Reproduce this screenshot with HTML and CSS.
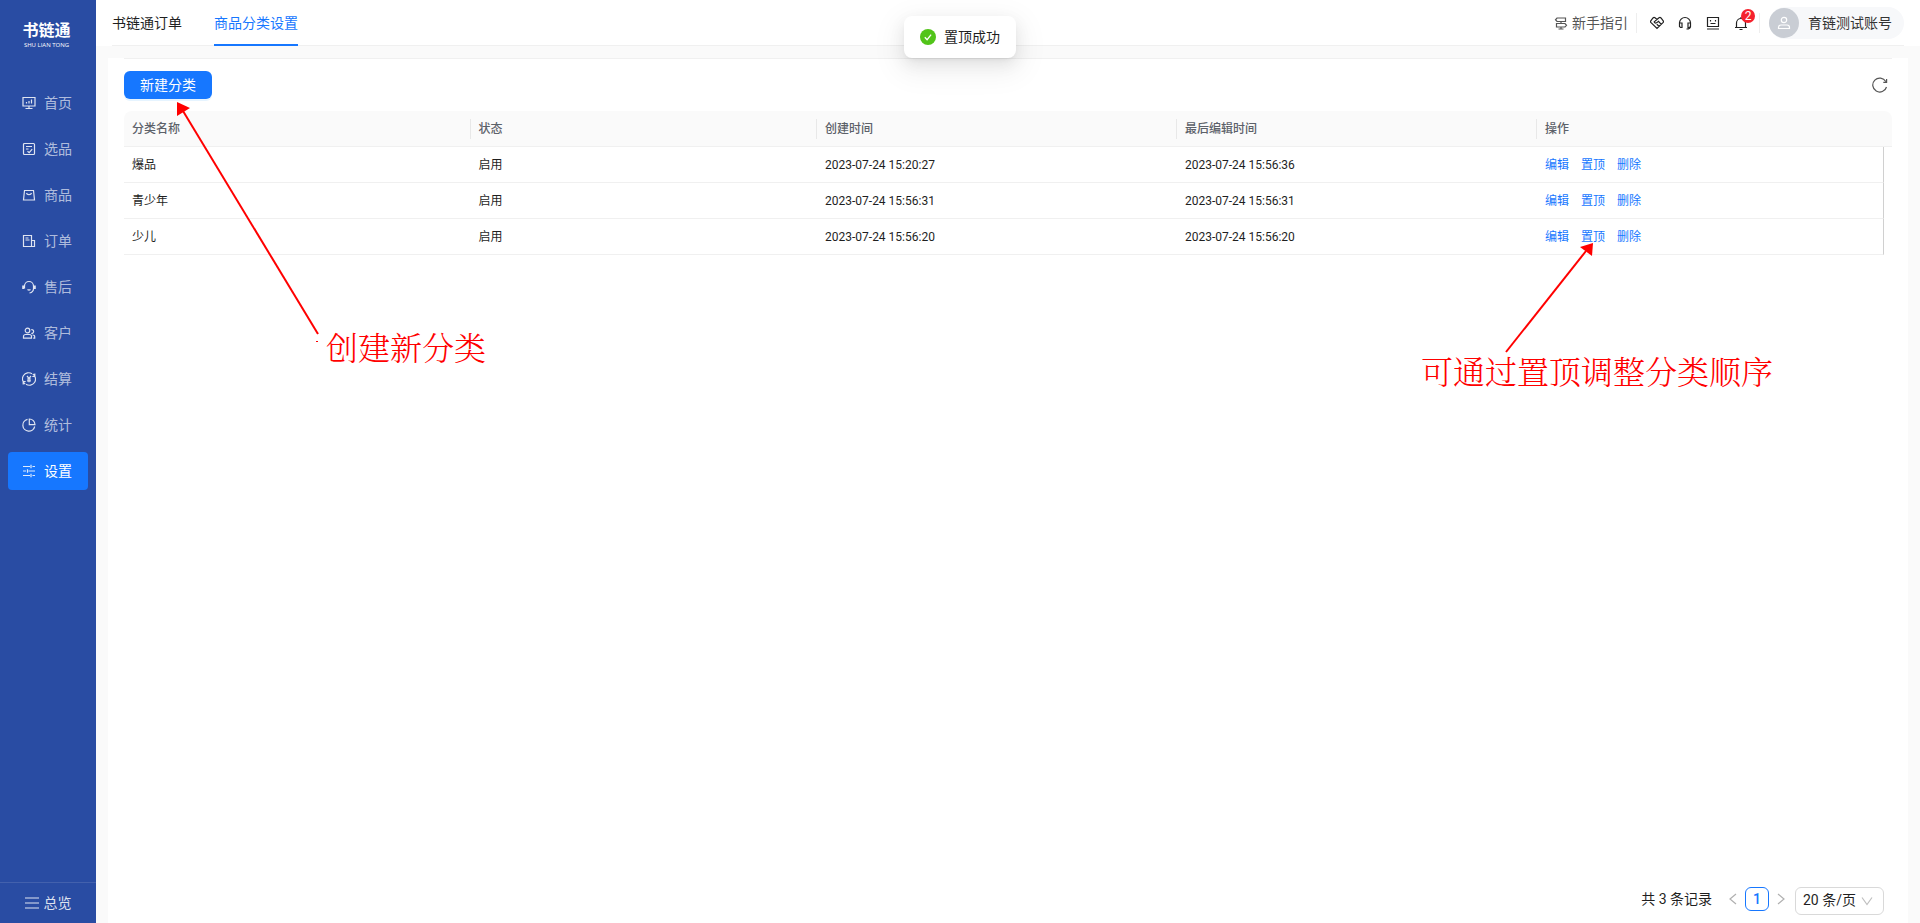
FILE: index.html
```html
<!DOCTYPE html>
<html lang="zh-CN">
<head>
<meta charset="utf-8">
<title>商品分类设置</title>
<link rel="stylesheet" href="styles.css">
</head>
<body>
<div class="app">
  <aside class="sidebar">
    <div class="logo">
      <span class="logo-name">书链通</span>
      <span class="logo-sub">SHU LIAN TONG</span>
    </div>
    <nav class="menu">
      <a class="menu-item" href="#"><svg class="icon" viewBox="0 0 14 14"><path d="M1 1.500h12v8.500H1zM7 10v2.500M3.500 12.500h7M4.500 7.500v-1.500M7 7.500v-2.500M9.500 7.500v-4"/></svg>首页</a>
      <a class="menu-item" href="#"><svg class="icon" viewBox="0 0 14 14"><rect x="1.500" y="1.500" width="11" height="11" rx="1"/><path d="M4 4.500h6M4 7h2.500M5.500 9.200l1.700 1.500L10.200 7.200"/></svg>选品</a>
      <a class="menu-item" href="#"><svg class="icon" viewBox="0 0 14 14"><path d="M2.500 2.500h9l1 9.500h-11zM4.500 5c.5 2.200 4.500 2.200 5 0"/></svg>商品</a>
      <a class="menu-item" href="#"><svg class="icon" viewBox="0 0 14 14"><path d="M9.500 12.500h-8v-11h8zM9.500 6.500h3v6h-3M3.500 4h3M3.500 6h4"/></svg>订单</a>
      <a class="menu-item" href="#"><svg class="icon" viewBox="0 0 14 14"><path d="M2.500 8.500V6a4.500 4.500 0 0 1 9 0v2.500c0 2.500-1.500 4-4 4.500M5.500 9.500c1 .8 2 .8 3 0"/><path d="M1.200 5.500v3.500M12.800 5.500v3.500" stroke-width="2"/></svg>售后</a>
      <a class="menu-item" href="#"><svg class="icon" viewBox="0 0 14 14"><circle cx="5.500" cy="4.500" r="2.300"/><path d="M1.500 12.200V10.500c0-1.200.8-2 2-2h4c1.200 0 2 .8 2 2v1.700zM9.300 3.600a1.900 1.900 0 1 1 0 3.700M10.500 9c1.500 0 2.200.8 2.200 1.800v1.400h-1.500"/></svg>客户</a>
      <a class="menu-item" href="#"><svg class="icon" viewBox="0 0 14 14"><path d="M3.200 12A6 6 0 0 1 10 1.800M10.800 2A6 6 0 0 1 4 12.200M12.800 1.500v3h-2.500M1.200 12.500v-3h2.500M5 4l2 2.300L9 4M7 6.300v4M5 7h4M5 8.800h4"/></svg>结算</a>
      <a class="menu-item" href="#"><svg class="icon" viewBox="0 0 14 14"><path d="M5.500 1.300a6 6 0 1 0 7.200 7.200M7.300 1v5.700H13A5.700 5.700 0 0 0 7.300 1z"/></svg>统计</a>
      <a class="menu-item active" href="#"><svg class="icon" viewBox="0 0 14 14"><path d="M1 2.500h7M10.500 2.500H13M1 7h3M6.500 7H13M1 11.500h7M10.500 11.500H13M9 .8v3.400M5.500 5.300v3.400M9 9.800v3.400"/></svg>设置</a>
    </nav>
    <a class="overview" href="#"><svg class="icon" viewBox="0 0 14 14"><path d="M0 2h14M0 7h14M0 12h14"/></svg>总览</a>
  </aside>

  <div class="main">
    <header class="topbar">
      <nav class="tabs">
        <a class="tab" href="#">书链通订单</a>
        <a class="tab current" href="#">商品分类设置</a>
      </nav>
      <div class="tools">
        <a class="guide" href="#"><svg class="icon guide-icon" viewBox="0 0 14 14"><path d="M3 2h8.500v3.500H3L1.500 3.750zM2.500 7.500H11l1.500 1.750L11 11H2.500zM7 5.500v2M7 11v2M4.500 13h5"/></svg>新手指引</a>
        <div class="icon-group">
          <button class="tool" aria-label="合作"><svg class="icon" viewBox="0 0 14 14"><path d="M7 3.500 5 1.800C4.300 1.300 3.700 1.300 3 2L.8 4.800c-.4.600-.4 1.100 0 1.600L7 12.400l6.200-6c.4-.5.400-1 0-1.600L11 2c-.7-.7-1.300-.7-2-.2L4.200 5.900c.7 1.500 2 1.500 3.300.2L8.500 5.300l2.800 3M6.800 8.200l2.400 2.200"/></svg></button>
          <button class="tool" aria-label="客服"><svg class="icon" viewBox="0 0 14 14"><path d="M1.500 9.500V7a5.500 5.500 0 0 1 11 0v3.500c0 1.500-1.500 2.500-4 2.500M1.500 7H4v4.500H2.500l-1-1zM12.500 7H10v4.500h1.500l1-1z"/></svg></button>
          <button class="tool" aria-label="反馈"><svg class="icon" viewBox="0 0 14 14"><path d="M1.500 1.500h11v9h-11zM1 13h12M4.500 4v1.500M9.500 4v1.500M4.500 7.500h5"/></svg></button>
          <button class="tool" aria-label="消息"><svg class="icon" viewBox="0 0 14 14"><path d="M2.500 11.500V7a4.500 4.500 0 0 1 9 0v4.500M1 11.500h12M7 2.500V1M5.500 13.500h3"/></svg><span class="badge">2</span></button>
        </div>
        <button class="account">
          <span class="avatar"><svg class="icon" viewBox="0 0 14 14"><circle cx="7" cy="4" r="2.700"/><path d="M1.500 12.500v-1c0-1.500 1-2.500 2.500-2.500h6c1.500 0 2.500 1 2.500 2.500v1z"/></svg></span>
          育链测试账号
        </button>
      </div>
    </header>

    <main class="panel">
      <div class="toolbar">
        <button class="primary">新建分类</button>
        <button class="reload" aria-label="刷新"><svg class="icon" viewBox="0 0 16 16"><path d="M14.500 10A7 7 0 1 1 13.800 4.500M14.600 2v3.300h-3.300"/></svg></button>
      </div>

      <table class="table">
        <colgroup><col class="c-name"><col class="c-state"><col class="c-time"><col class="c-time"><col><col class="c-gutter"></colgroup>
        <thead>
          <tr><th>分类名称</th><th>状态</th><th>创建时间</th><th>最后编辑时间</th><th colspan="2">操作</th></tr>
        </thead>
        <tbody>
          <tr><td>爆品</td><td>启用</td><td>2023-07-24 15:20:27</td><td>2023-07-24 15:56:36</td><td><div class="actions"><a href="#">编辑</a><a href="#">置顶</a><a href="#">删除</a></div></td></tr>
          <tr><td>青少年</td><td>启用</td><td>2023-07-24 15:56:31</td><td>2023-07-24 15:56:31</td><td><div class="actions"><a href="#">编辑</a><a href="#">置顶</a><a href="#">删除</a></div></td></tr>
          <tr><td>少儿</td><td>启用</td><td>2023-07-24 15:56:20</td><td>2023-07-24 15:56:20</td><td><div class="actions"><a href="#">编辑</a><a href="#">置顶</a><a href="#">删除</a></div></td></tr>
        </tbody>
      </table>

      <footer class="pagination">
        <span class="total">共 3 条记录</span>
        <div class="pager">
          <button class="step" aria-label="上一页"><svg class="icon" viewBox="0 0 12 12"><path d="M9 1 3 6l6 5"/></svg></button>
          <button class="page">1</button>
          <button class="step" aria-label="下一页"><svg class="icon" viewBox="0 0 12 12"><path d="m3 1 6 5-6 5"/></svg></button>
        </div>
        <div class="size">
          <select aria-label="每页条数"><option>20 条/页</option></select>
          <svg class="icon size-arrow" viewBox="0 0 12 12"><path d="m1 2.500 5 7 5-7"/></svg>
        </div>
      </footer>
    </main>
  </div>
</div>

<div class="toast" role="status">
  <svg class="toast-icon" viewBox="0 0 16 16"><circle cx="8" cy="8" r="8" fill="#52c41a"/><path d="m4.800 8.200 2.300 2.500 4-5" fill="none" stroke="#fff" stroke-width="1.300"/></svg>
  置顶成功
</div>

<svg class="arrow arrow-create" viewBox="0 0 144 242"><path class="shaft" d="M6 9 141 232"/><path class="tip" d="M0 0 13 6 0 14z"/><path class="tip" d="M139 239h2v1h-2z"/></svg>
<p class="note note-create">创建新分类</p>
<svg class="arrow arrow-top" viewBox="0 0 90 112"><path class="shaft" d="M81 8 1 109"/><path class="tip" d="M88 0 75 4 87 13z"/></svg>
<p class="note note-top">可通过置顶调整分类顺序</p>
</body>
</html>
```

FILE: styles.css
```css
* { box-sizing: border-box; }

body {
  margin: 0;
  font: 14px/22px Roboto, "Noto Sans CJK SC", sans-serif;
  color: #1f1f1f;
  background: #fafafa;
}

a { color: inherit; text-decoration: none; }

button {
  margin: 0;
  padding: 0;
  border: 0;
  background: none;
  color: inherit;
  font: inherit;
  cursor: pointer;
}

.icon {
  display: block;
  flex: none;
  width: 14px;
  height: 14px;
  fill: none;
  stroke: currentColor;
  stroke-width: 1.2;
}

.app { display: flex; min-height: 100vh; }

/* Sidebar */
.sidebar {
  display: flex;
  flex-direction: column;
  flex: none;
  width: 96px;
  background: #294ca3;
  color: rgba(255, 255, 255, 0.65);
}

.logo {
  display: flex;
  flex-direction: column;
  align-items: center;
  height: 84px;
  padding-top: 20px;
  padding-right: 3px;
  color: #fff;
}

.logo-name { font-size: 16px; font-weight: 700; line-height: 22px; }
.logo-sub { font: 6px/6px "Open Sans", sans-serif; }

.menu { display: flex; flex-direction: column; gap: 8px; padding: 0 8px; }

.menu-item {
  display: flex;
  align-items: center;
  gap: 8px;
  height: 38px;
  padding-left: 14px;
  border-radius: 4px;
}

.menu-item .icon { color: rgba(255, 255, 255, 0.85); }
.menu-item.active { background: #1677ff; color: #fff; }

.overview {
  display: flex;
  align-items: center;
  justify-content: center;
  gap: 5px;
  height: 41px;
  margin-top: auto;
  border-top: 1px solid #4361ad;
  color: rgba(255, 255, 255, 0.85);
}

/* Top bar */
.main { display: flex; flex-direction: column; flex: 1; min-width: 0; }

.topbar {
  display: flex;
  justify-content: space-between;
  height: 46px;
  padding: 0 16px;
  background: linear-gradient(#f0f0f0, #f0f0f0) 16px 100% / calc(100% - 32px) 1px no-repeat #fff;
}

.tabs { display: flex; gap: 32px; }
.tab { height: 46px; line-height: 46px; }
.tab.current { color: #1677ff; border-bottom: 2px solid #1677ff; }

.tools { display: flex; align-items: center; color: #333; }
.guide { display: flex; align-items: center; gap: 4px; padding-right: 8px; color: #555; }

.icon-group {
  display: flex;
  align-items: center;
  gap: 14px;
  height: 20px;
  margin-right: 9px;
  padding: 0 11px 0 13px;
  border: solid #eee;
  border-width: 0 1px;
}

.tool { position: relative; color: #222; }

.badge {
  position: absolute;
  top: -7px;
  left: 7px;
  width: 14px;
  height: 14px;
  border-radius: 7px;
  background: #f5222d;
  color: #fff;
  font-size: 12px;
  line-height: 14px;
}

.account {
  display: flex;
  align-items: center;
  gap: 9px;
  height: 32px;
  padding-right: 12px;
  border-radius: 16px;
  background: #f7f8fa;
}

.avatar {
  display: flex;
  align-items: center;
  justify-content: center;
  width: 30px;
  height: 30px;
  border-radius: 50%;
  background: #c9cdd4;
  color: #fff;
}

/* Content panel */
.panel {
  display: flex;
  flex-direction: column;
  flex: 1;
  margin: 12px 12px 0;
  padding: 0 16px 8px;
  background: #fff;
}

.toolbar {
  display: flex;
  align-items: center;
  justify-content: space-between;
  height: 53px;
  padding-right: 4px;
  border-top: 1px solid #f0f0f0;
}

.primary {
  height: 28px;
  padding: 0 16px;
  border-radius: 6px;
  background: #1677ff;
  box-shadow: 0 2px 0 rgba(5, 145, 255, 0.1);
  color: #fff;
}

.reload { color: #555; }
.reload .icon { width: 16px; height: 16px; }

.table {
  width: 100%;
  table-layout: fixed;
  border-spacing: 0;
  font-size: 12px;
  line-height: 20px;
}

.c-name, .c-state { width: 19.6%; }
.c-time { width: 20.36%; }
.c-gutter { width: 8px; }

.table th, .table td {
  height: 36px;
  padding: 0 8px;
  border-bottom: 1px solid #f0f0f0;
  text-align: left;
}

.table th {
  background: linear-gradient(#e8e8e8, #e8e8e8) 100% 50% / 1px 20px no-repeat #fafafa;
  color: #5c6169;
  font-weight: 500;
}

.table th:first-child { border-top-left-radius: 8px; }
.table th:last-child { border-top-right-radius: 8px; background: #fafafa; }
.table td:last-child { border-right: 1px solid #d0d0d0; }

.actions { display: flex; gap: 12px; color: #1677ff; }

.pagination {
  display: flex;
  align-items: flex-start;
  justify-content: flex-end;
  margin-top: auto;
  padding-right: 8px;
}

.total { margin-right: 12px; line-height: 24px; }
.pager { display: flex; margin-right: 5px; }
.step { display: flex; align-items: center; justify-content: center; width: 18px; height: 24px; color: #b0b0b0; }
.pager .icon, .size-arrow { width: 12px; height: 12px; }

.page {
  width: 24px;
  height: 24px;
  margin: 0 3px;
  border: 1px solid #1677ff;
  border-radius: 6px;
  color: #1677ff;
  font-weight: 500;
}

.size { position: relative; }

.size select {
  display: block;
  width: 89px;
  height: 28px;
  padding: 0 7px 3px;
  border: 1px solid #d9d9d9;
  border-radius: 6px;
  background: #fff;
  color: inherit;
  font: inherit;
  appearance: none;
}

.size-arrow {
  position: absolute;
  top: 8px;
  right: 11px;
  color: #bfbfbf;
  pointer-events: none;
}

/* Toast */
.toast {
  position: absolute;
  top: 16px;
  left: 50%;
  display: flex;
  align-items: center;
  gap: 8px;
  padding: 10px 16px;
  border-radius: 8px;
  background: #fff;
  box-shadow: 0 6px 16px rgba(0, 0, 0, 0.08), 0 3px 6px -4px rgba(0, 0, 0, 0.12), 0 9px 28px 8px rgba(0, 0, 0, 0.05);
  transform: translateX(-50%);
}

.toast-icon { width: 16px; height: 16px; }

/* Annotations over the page */
.arrow { position: absolute; pointer-events: none; }
.arrow-create { left: 177px; top: 102px; width: 144px; height: 242px; }
.arrow-top { left: 1505px; top: 243px; width: 90px; height: 112px; }
.shaft { fill: none; stroke: #f00; stroke-width: 2; }
.tip { fill: #f00; }

.note {
  position: absolute;
  margin: 0;
  color: #f00;
  font: 300 32px/40px "Noto Serif CJK SC", "Noto Sans CJK SC", serif;
  white-space: nowrap;
}

.note-create { left: 326px; top: 326px; }
.note-top { left: 1421px; top: 350px; }
```
